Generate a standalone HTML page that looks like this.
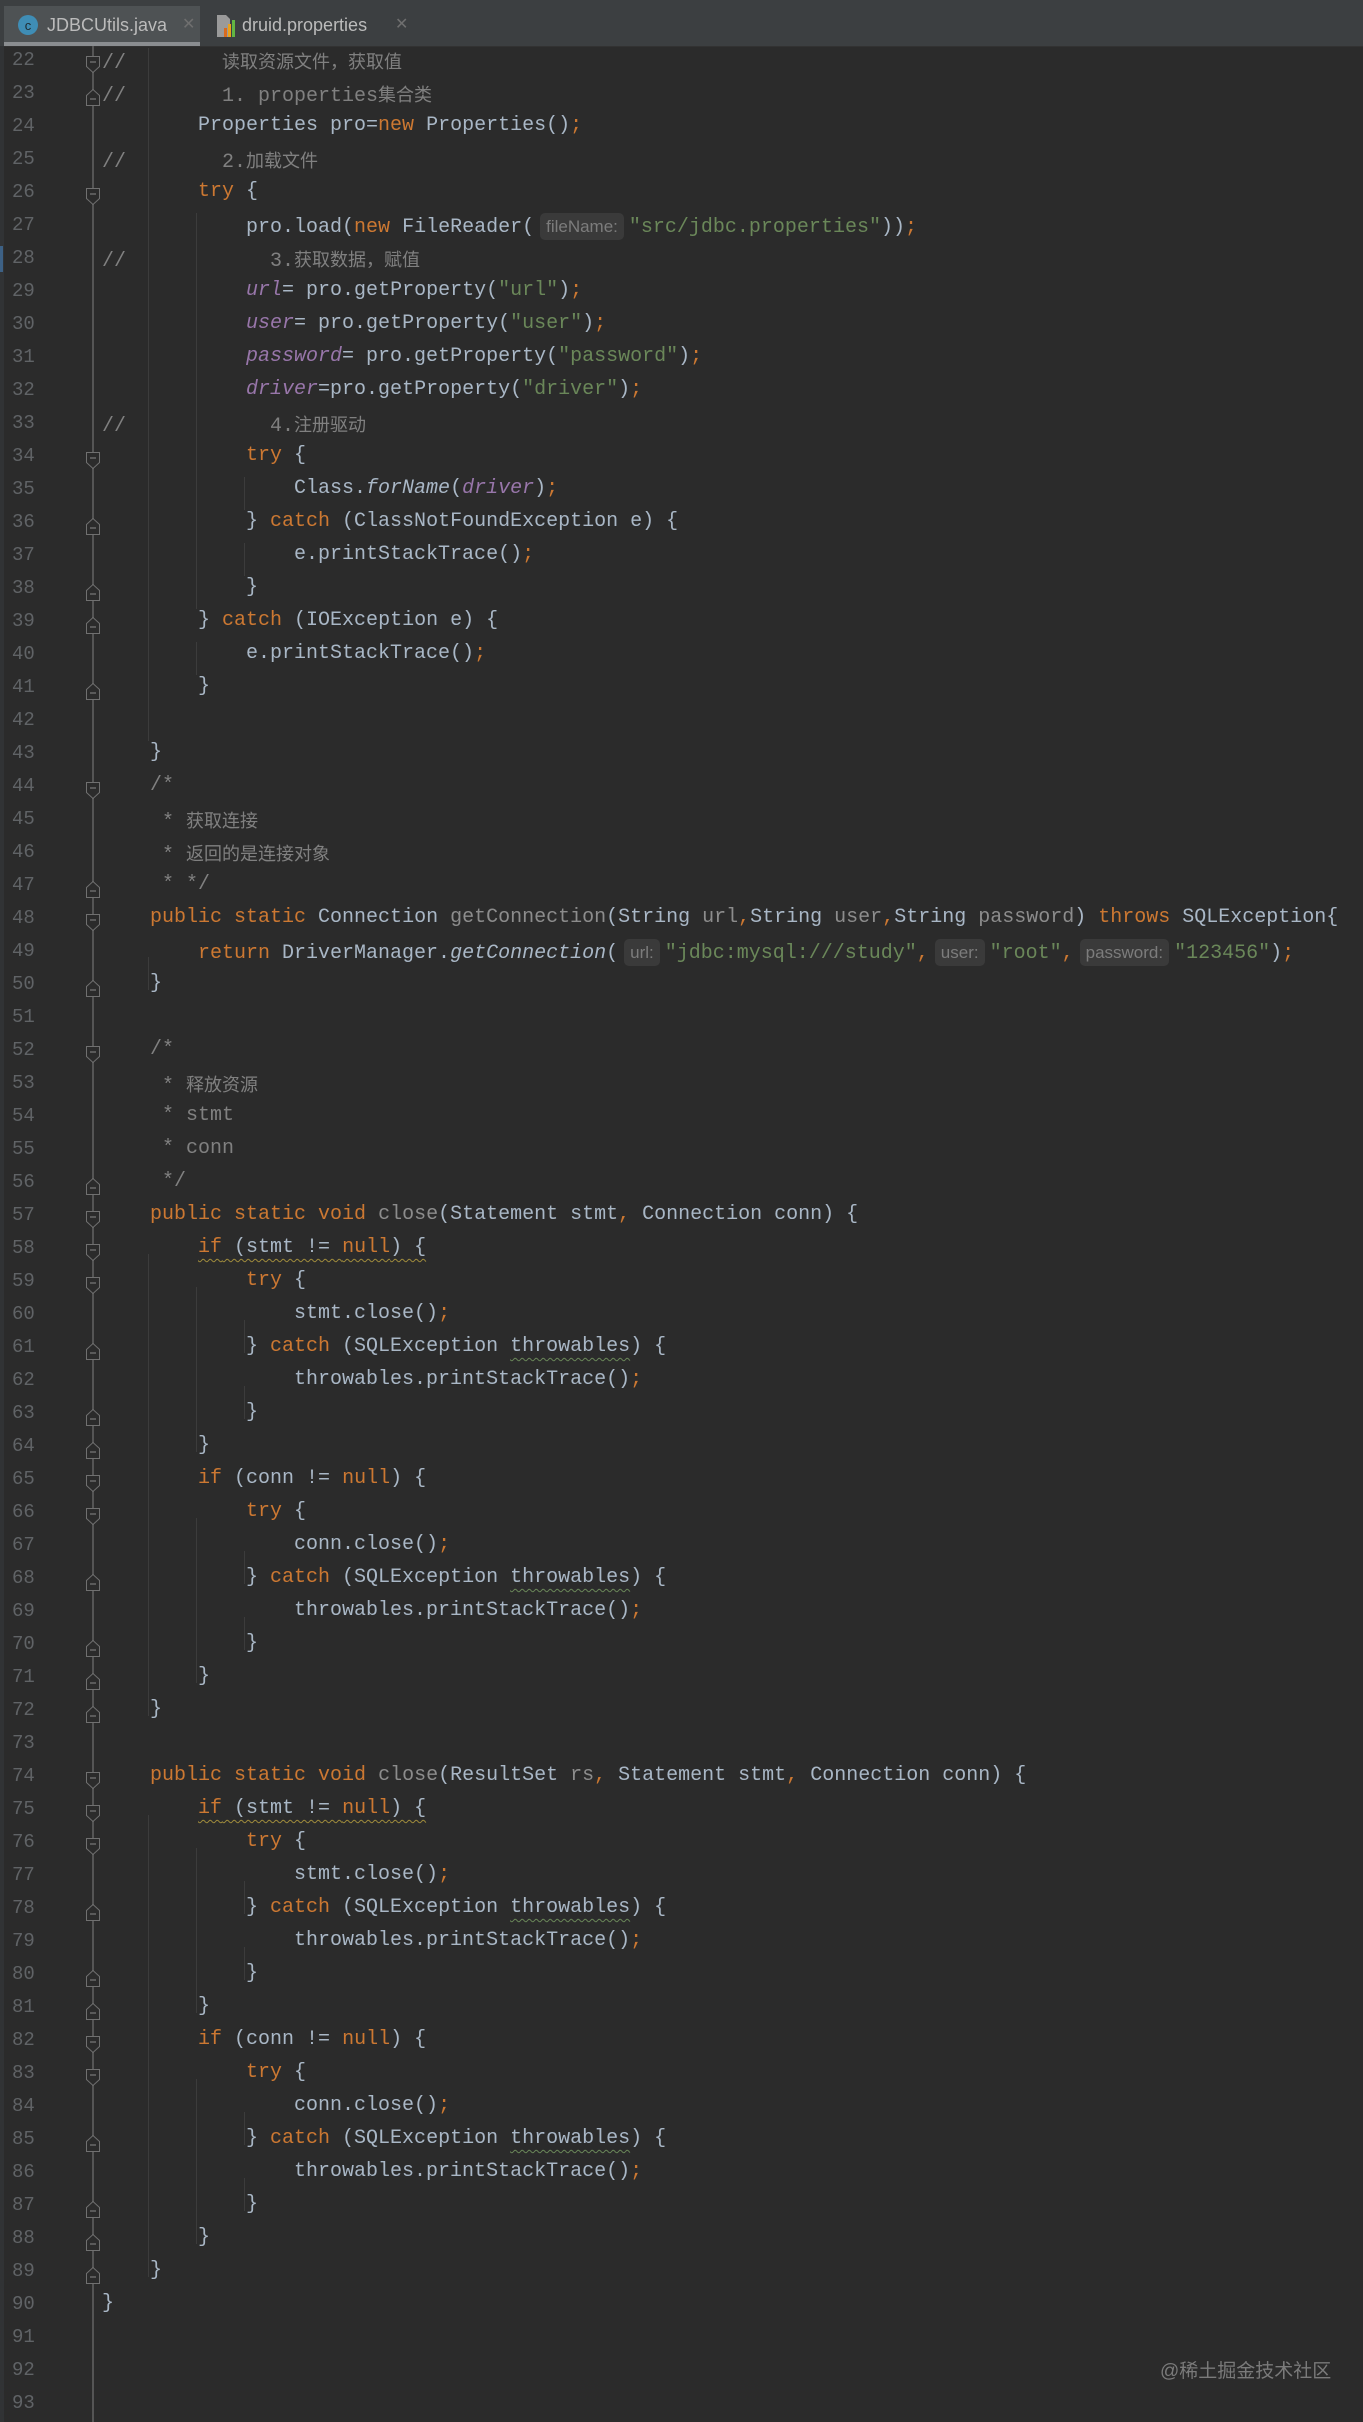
<!DOCTYPE html>
<html><head><meta charset="utf-8"><style>
html,body{margin:0;padding:0;background:#2b2b2b;width:1363px;height:2422px;overflow:hidden;position:relative}
.tabs{position:absolute;left:0;top:0;width:1363px;height:46px;background:#3c3f41;border-bottom:1px solid #323232}
.tab{position:absolute;top:6px;height:40px;font:18px "Liberation Sans","DejaVu Sans",sans-serif;color:#bbbbbb;line-height:38px}
.t1{left:4px;width:196px;background:#4e5254;border-bottom:4px solid #8a8d90;box-sizing:border-box}
.x{color:#6f6f6f;font-size:16px}
.gl{position:absolute;left:92px;top:46px;width:2px;height:2376px;background:#555}
.edge{position:absolute;left:0;top:46px;width:4px;height:2376px;background:#313335}
.rows{position:absolute;left:0;top:48px;width:1363px}
.r{height:33px;line-height:33px;position:relative;white-space:pre;font:20px "Liberation Mono","DejaVu Sans Mono",monospace;color:#a9b7c6}
.n{position:absolute;left:12px;top:1px;color:#606366;font-size:19px}
.c{position:absolute;left:102px;top:0}
.f{position:absolute;left:85px;top:7px}
.k{color:#cc7832}.s{color:#6a8759}.m{color:#808080}.v{color:#9876aa;font-style:italic}.i{font-style:italic}.u{color:#8c8c8c}
.cj{font-family:"Liberation Sans","Noto Sans CJK SC",sans-serif;font-size:18px}
.h{display:inline-block;font:17px "Liberation Sans",sans-serif;color:#7c7c7c;background:#3a3a3a;border-radius:5px;padding:0 6px;margin:0 5px 0 6px;height:27px;line-height:27px;vertical-align:middle}
.w{text-decoration:underline wavy #a08c3c;text-underline-offset:6px;text-decoration-thickness:1px}
.wg{text-decoration:underline wavy #6a8759;text-underline-offset:6px;text-decoration-thickness:1px}
.g{position:absolute;width:1px;background:#3c3c3c}
.wm{position:absolute;left:1160px;top:2356px;font:19px "Liberation Sans","Noto Sans CJK SC",sans-serif;color:#7a7a7a}
</style></head><body>
<div class="tabs">
 <div class="tab t1"><svg style="position:absolute;left:14px;top:9px" width="20" height="20"><circle cx="10" cy="10" r="10" fill="#3f8db5"/><text x="10" y="15" text-anchor="middle" font-family="Liberation Sans" font-size="13" fill="#1e2a30">c</text></svg><span style="position:absolute;left:43px">JDBCUtils.java</span><span class="x" style="position:absolute;left:178px">✕</span></div>
 <div class="tab" style="left:210px;width:200px"><svg style="position:absolute;left:6px;top:8px" width="20" height="24"><path d="M1 1h9l4 4v18H1z" fill="#9a9a9a"/><rect x="8" y="14" width="3" height="9" fill="#d96b1e"/><rect x="12" y="10" width="3" height="13" fill="#e9a11b"/><rect x="16" y="6" width="3" height="17" fill="#62b543"/></svg><span style="position:absolute;left:32px">druid.properties</span><span class="x" style="position:absolute;left:185px">✕</span></div>
</div>
<div class="edge"></div>
<div style="position:absolute;left:0;top:246px;width:3px;height:26px;background:#3d6185"></div>
<div class="gl"></div>
<div class="g" style="left:148px;top:48px;height:693px"></div>
<div class="g" style="left:148px;top:957px;height:33px"></div>
<div class="g" style="left:148px;top:1254px;height:462px"></div>
<div class="g" style="left:148px;top:1815px;height:462px"></div>
<div class="g" style="left:196px;top:213px;height:396px"></div>
<div class="g" style="left:196px;top:642px;height:33px"></div>
<div class="g" style="left:196px;top:1287px;height:165px"></div>
<div class="g" style="left:196px;top:1518px;height:165px"></div>
<div class="g" style="left:196px;top:1848px;height:165px"></div>
<div class="g" style="left:196px;top:2079px;height:165px"></div>
<div class="g" style="left:244px;top:477px;height:33px"></div>
<div class="g" style="left:244px;top:543px;height:33px"></div>
<div class="g" style="left:244px;top:1320px;height:33px"></div>
<div class="g" style="left:244px;top:1386px;height:33px"></div>
<div class="g" style="left:244px;top:1551px;height:33px"></div>
<div class="g" style="left:244px;top:1617px;height:33px"></div>
<div class="g" style="left:244px;top:1881px;height:33px"></div>
<div class="g" style="left:244px;top:1947px;height:33px"></div>
<div class="g" style="left:244px;top:2112px;height:33px"></div>
<div class="g" style="left:244px;top:2178px;height:33px"></div>
<div class="rows">
<div class="r"><span class="n">22</span><svg class="f" width="16" height="19"><path d="M1.5 1.5h13v10l-6.5 6-6.5-6z" fill="#2b2b2b" stroke="#707070"/><path d="M5 7h6" stroke="#8a8a8a"/></svg><span class="c m">//        <span class="cj">读取资源文件，获取值</span></span></div>
<div class="r"><span class="n">23</span><svg class="f" width="16" height="19"><path d="M1.5 17.5h13v-10l-6.5-6-6.5 6z" fill="#2b2b2b" stroke="#707070"/><path d="M5 11h6" stroke="#8a8a8a"/></svg><span class="c m">//        1. properties<span class="cj">集合类</span></span></div>
<div class="r"><span class="n">24</span><span class="c">        Properties pro=<span class="k">new</span> Properties()<span class="k">;</span></span></div>
<div class="r"><span class="n">25</span><span class="c m">//        2.<span class="cj">加载文件</span></span></div>
<div class="r"><span class="n">26</span><svg class="f" width="16" height="19"><path d="M1.5 1.5h13v10l-6.5 6-6.5-6z" fill="#2b2b2b" stroke="#707070"/><path d="M5 7h6" stroke="#8a8a8a"/></svg><span class="c">        <span class="k">try</span> {</span></div>
<div class="r"><span class="n">27</span><span class="c">            pro.load(<span class="k">new</span> FileReader(<span class="h">fileName:</span><span class="s">"src/jdbc.properties"</span>))<span class="k">;</span></span></div>
<div class="r"><span class="n">28</span><span class="c m">//            3.<span class="cj">获取数据，赋值</span></span></div>
<div class="r"><span class="n">29</span><span class="c">            <span class="v">url</span>= pro.getProperty(<span class="s">"url"</span>)<span class="k">;</span></span></div>
<div class="r"><span class="n">30</span><span class="c">            <span class="v">user</span>= pro.getProperty(<span class="s">"user"</span>)<span class="k">;</span></span></div>
<div class="r"><span class="n">31</span><span class="c">            <span class="v">password</span>= pro.getProperty(<span class="s">"password"</span>)<span class="k">;</span></span></div>
<div class="r"><span class="n">32</span><span class="c">            <span class="v">driver</span>=pro.getProperty(<span class="s">"driver"</span>)<span class="k">;</span></span></div>
<div class="r"><span class="n">33</span><span class="c m">//            4.<span class="cj">注册驱动</span></span></div>
<div class="r"><span class="n">34</span><svg class="f" width="16" height="19"><path d="M1.5 1.5h13v10l-6.5 6-6.5-6z" fill="#2b2b2b" stroke="#707070"/><path d="M5 7h6" stroke="#8a8a8a"/></svg><span class="c">            <span class="k">try</span> {</span></div>
<div class="r"><span class="n">35</span><span class="c">                Class.<span class="i">forName</span>(<span class="v">driver</span>)<span class="k">;</span></span></div>
<div class="r"><span class="n">36</span><svg class="f" width="16" height="19"><path d="M1.5 17.5h13v-10l-6.5-6-6.5 6z" fill="#2b2b2b" stroke="#707070"/><path d="M5 11h6" stroke="#8a8a8a"/></svg><span class="c">            } <span class="k">catch</span> (ClassNotFoundException e) {</span></div>
<div class="r"><span class="n">37</span><span class="c">                e.printStackTrace()<span class="k">;</span></span></div>
<div class="r"><span class="n">38</span><svg class="f" width="16" height="19"><path d="M1.5 17.5h13v-10l-6.5-6-6.5 6z" fill="#2b2b2b" stroke="#707070"/><path d="M5 11h6" stroke="#8a8a8a"/></svg><span class="c">            }</span></div>
<div class="r"><span class="n">39</span><svg class="f" width="16" height="19"><path d="M1.5 17.5h13v-10l-6.5-6-6.5 6z" fill="#2b2b2b" stroke="#707070"/><path d="M5 11h6" stroke="#8a8a8a"/></svg><span class="c">        } <span class="k">catch</span> (IOException e) {</span></div>
<div class="r"><span class="n">40</span><span class="c">            e.printStackTrace()<span class="k">;</span></span></div>
<div class="r"><span class="n">41</span><svg class="f" width="16" height="19"><path d="M1.5 17.5h13v-10l-6.5-6-6.5 6z" fill="#2b2b2b" stroke="#707070"/><path d="M5 11h6" stroke="#8a8a8a"/></svg><span class="c">        }</span></div>
<div class="r"><span class="n">42</span></div>
<div class="r"><span class="n">43</span><span class="c">    }</span></div>
<div class="r"><span class="n">44</span><svg class="f" width="16" height="19"><path d="M1.5 1.5h13v10l-6.5 6-6.5-6z" fill="#2b2b2b" stroke="#707070"/><path d="M5 7h6" stroke="#8a8a8a"/></svg><span class="c m">    /*</span></div>
<div class="r"><span class="n">45</span><span class="c m">     * <span class="cj">获取连接</span></span></div>
<div class="r"><span class="n">46</span><span class="c m">     * <span class="cj">返回的是连接对象</span></span></div>
<div class="r"><span class="n">47</span><svg class="f" width="16" height="19"><path d="M1.5 17.5h13v-10l-6.5-6-6.5 6z" fill="#2b2b2b" stroke="#707070"/><path d="M5 11h6" stroke="#8a8a8a"/></svg><span class="c m">     * */</span></div>
<div class="r"><span class="n">48</span><svg class="f" width="16" height="19"><path d="M1.5 1.5h13v10l-6.5 6-6.5-6z" fill="#2b2b2b" stroke="#707070"/><path d="M5 7h6" stroke="#8a8a8a"/></svg><span class="c">    <span class="k">public static</span> Connection <span class="u">getConnection</span>(String <span class="u">url</span><span class="k">,</span>String <span class="u">user</span><span class="k">,</span>String <span class="u">password</span>) <span class="k">throws</span> SQLException{</span></div>
<div class="r"><span class="n">49</span><span class="c">        <span class="k">return</span> DriverManager.<span class="i">getConnection</span>(<span class="h">url:</span><span class="s">"jdbc:mysql:///study"</span><span class="k">,</span><span class="h">user:</span><span class="s">"root"</span><span class="k">,</span><span class="h">password:</span><span class="s">"123456"</span>)<span class="k">;</span></span></div>
<div class="r"><span class="n">50</span><svg class="f" width="16" height="19"><path d="M1.5 17.5h13v-10l-6.5-6-6.5 6z" fill="#2b2b2b" stroke="#707070"/><path d="M5 11h6" stroke="#8a8a8a"/></svg><span class="c">    }</span></div>
<div class="r"><span class="n">51</span></div>
<div class="r"><span class="n">52</span><svg class="f" width="16" height="19"><path d="M1.5 1.5h13v10l-6.5 6-6.5-6z" fill="#2b2b2b" stroke="#707070"/><path d="M5 7h6" stroke="#8a8a8a"/></svg><span class="c m">    /*</span></div>
<div class="r"><span class="n">53</span><span class="c m">     * <span class="cj">释放资源</span></span></div>
<div class="r"><span class="n">54</span><span class="c m">     * stmt</span></div>
<div class="r"><span class="n">55</span><span class="c m">     * conn</span></div>
<div class="r"><span class="n">56</span><svg class="f" width="16" height="19"><path d="M1.5 17.5h13v-10l-6.5-6-6.5 6z" fill="#2b2b2b" stroke="#707070"/><path d="M5 11h6" stroke="#8a8a8a"/></svg><span class="c m">     */</span></div>
<div class="r"><span class="n">57</span><svg class="f" width="16" height="19"><path d="M1.5 1.5h13v10l-6.5 6-6.5-6z" fill="#2b2b2b" stroke="#707070"/><path d="M5 7h6" stroke="#8a8a8a"/></svg><span class="c">    <span class="k">public static void</span> <span class="u">close</span>(Statement stmt<span class="k">,</span> Connection conn) {</span></div>
<div class="r"><span class="n">58</span><svg class="f" width="16" height="19"><path d="M1.5 1.5h13v10l-6.5 6-6.5-6z" fill="#2b2b2b" stroke="#707070"/><path d="M5 7h6" stroke="#8a8a8a"/></svg><span class="c">        <span class="w"><span class="k">if</span> (stmt != <span class="k">null</span>) {</span></span></div>
<div class="r"><span class="n">59</span><svg class="f" width="16" height="19"><path d="M1.5 1.5h13v10l-6.5 6-6.5-6z" fill="#2b2b2b" stroke="#707070"/><path d="M5 7h6" stroke="#8a8a8a"/></svg><span class="c">            <span class="k">try</span> {</span></div>
<div class="r"><span class="n">60</span><span class="c">                stmt.close()<span class="k">;</span></span></div>
<div class="r"><span class="n">61</span><svg class="f" width="16" height="19"><path d="M1.5 17.5h13v-10l-6.5-6-6.5 6z" fill="#2b2b2b" stroke="#707070"/><path d="M5 11h6" stroke="#8a8a8a"/></svg><span class="c">            } <span class="k">catch</span> (SQLException <span class="wg">throwables</span>) {</span></div>
<div class="r"><span class="n">62</span><span class="c">                throwables.printStackTrace()<span class="k">;</span></span></div>
<div class="r"><span class="n">63</span><svg class="f" width="16" height="19"><path d="M1.5 17.5h13v-10l-6.5-6-6.5 6z" fill="#2b2b2b" stroke="#707070"/><path d="M5 11h6" stroke="#8a8a8a"/></svg><span class="c">            }</span></div>
<div class="r"><span class="n">64</span><svg class="f" width="16" height="19"><path d="M1.5 17.5h13v-10l-6.5-6-6.5 6z" fill="#2b2b2b" stroke="#707070"/><path d="M5 11h6" stroke="#8a8a8a"/></svg><span class="c">        }</span></div>
<div class="r"><span class="n">65</span><svg class="f" width="16" height="19"><path d="M1.5 1.5h13v10l-6.5 6-6.5-6z" fill="#2b2b2b" stroke="#707070"/><path d="M5 7h6" stroke="#8a8a8a"/></svg><span class="c">        <span class="k">if</span> (conn != <span class="k">null</span>) {</span></div>
<div class="r"><span class="n">66</span><svg class="f" width="16" height="19"><path d="M1.5 1.5h13v10l-6.5 6-6.5-6z" fill="#2b2b2b" stroke="#707070"/><path d="M5 7h6" stroke="#8a8a8a"/></svg><span class="c">            <span class="k">try</span> {</span></div>
<div class="r"><span class="n">67</span><span class="c">                conn.close()<span class="k">;</span></span></div>
<div class="r"><span class="n">68</span><svg class="f" width="16" height="19"><path d="M1.5 17.5h13v-10l-6.5-6-6.5 6z" fill="#2b2b2b" stroke="#707070"/><path d="M5 11h6" stroke="#8a8a8a"/></svg><span class="c">            } <span class="k">catch</span> (SQLException <span class="wg">throwables</span>) {</span></div>
<div class="r"><span class="n">69</span><span class="c">                throwables.printStackTrace()<span class="k">;</span></span></div>
<div class="r"><span class="n">70</span><svg class="f" width="16" height="19"><path d="M1.5 17.5h13v-10l-6.5-6-6.5 6z" fill="#2b2b2b" stroke="#707070"/><path d="M5 11h6" stroke="#8a8a8a"/></svg><span class="c">            }</span></div>
<div class="r"><span class="n">71</span><svg class="f" width="16" height="19"><path d="M1.5 17.5h13v-10l-6.5-6-6.5 6z" fill="#2b2b2b" stroke="#707070"/><path d="M5 11h6" stroke="#8a8a8a"/></svg><span class="c">        }</span></div>
<div class="r"><span class="n">72</span><svg class="f" width="16" height="19"><path d="M1.5 17.5h13v-10l-6.5-6-6.5 6z" fill="#2b2b2b" stroke="#707070"/><path d="M5 11h6" stroke="#8a8a8a"/></svg><span class="c">    }</span></div>
<div class="r"><span class="n">73</span></div>
<div class="r"><span class="n">74</span><svg class="f" width="16" height="19"><path d="M1.5 1.5h13v10l-6.5 6-6.5-6z" fill="#2b2b2b" stroke="#707070"/><path d="M5 7h6" stroke="#8a8a8a"/></svg><span class="c">    <span class="k">public static void</span> <span class="u">close</span>(ResultSet <span class="u">rs</span><span class="k">,</span> Statement stmt<span class="k">,</span> Connection conn) {</span></div>
<div class="r"><span class="n">75</span><svg class="f" width="16" height="19"><path d="M1.5 1.5h13v10l-6.5 6-6.5-6z" fill="#2b2b2b" stroke="#707070"/><path d="M5 7h6" stroke="#8a8a8a"/></svg><span class="c">        <span class="w"><span class="k">if</span> (stmt != <span class="k">null</span>) {</span></span></div>
<div class="r"><span class="n">76</span><svg class="f" width="16" height="19"><path d="M1.5 1.5h13v10l-6.5 6-6.5-6z" fill="#2b2b2b" stroke="#707070"/><path d="M5 7h6" stroke="#8a8a8a"/></svg><span class="c">            <span class="k">try</span> {</span></div>
<div class="r"><span class="n">77</span><span class="c">                stmt.close()<span class="k">;</span></span></div>
<div class="r"><span class="n">78</span><svg class="f" width="16" height="19"><path d="M1.5 17.5h13v-10l-6.5-6-6.5 6z" fill="#2b2b2b" stroke="#707070"/><path d="M5 11h6" stroke="#8a8a8a"/></svg><span class="c">            } <span class="k">catch</span> (SQLException <span class="wg">throwables</span>) {</span></div>
<div class="r"><span class="n">79</span><span class="c">                throwables.printStackTrace()<span class="k">;</span></span></div>
<div class="r"><span class="n">80</span><svg class="f" width="16" height="19"><path d="M1.5 17.5h13v-10l-6.5-6-6.5 6z" fill="#2b2b2b" stroke="#707070"/><path d="M5 11h6" stroke="#8a8a8a"/></svg><span class="c">            }</span></div>
<div class="r"><span class="n">81</span><svg class="f" width="16" height="19"><path d="M1.5 17.5h13v-10l-6.5-6-6.5 6z" fill="#2b2b2b" stroke="#707070"/><path d="M5 11h6" stroke="#8a8a8a"/></svg><span class="c">        }</span></div>
<div class="r"><span class="n">82</span><svg class="f" width="16" height="19"><path d="M1.5 1.5h13v10l-6.5 6-6.5-6z" fill="#2b2b2b" stroke="#707070"/><path d="M5 7h6" stroke="#8a8a8a"/></svg><span class="c">        <span class="k">if</span> (conn != <span class="k">null</span>) {</span></div>
<div class="r"><span class="n">83</span><svg class="f" width="16" height="19"><path d="M1.5 1.5h13v10l-6.5 6-6.5-6z" fill="#2b2b2b" stroke="#707070"/><path d="M5 7h6" stroke="#8a8a8a"/></svg><span class="c">            <span class="k">try</span> {</span></div>
<div class="r"><span class="n">84</span><span class="c">                conn.close()<span class="k">;</span></span></div>
<div class="r"><span class="n">85</span><svg class="f" width="16" height="19"><path d="M1.5 17.5h13v-10l-6.5-6-6.5 6z" fill="#2b2b2b" stroke="#707070"/><path d="M5 11h6" stroke="#8a8a8a"/></svg><span class="c">            } <span class="k">catch</span> (SQLException <span class="wg">throwables</span>) {</span></div>
<div class="r"><span class="n">86</span><span class="c">                throwables.printStackTrace()<span class="k">;</span></span></div>
<div class="r"><span class="n">87</span><svg class="f" width="16" height="19"><path d="M1.5 17.5h13v-10l-6.5-6-6.5 6z" fill="#2b2b2b" stroke="#707070"/><path d="M5 11h6" stroke="#8a8a8a"/></svg><span class="c">            }</span></div>
<div class="r"><span class="n">88</span><svg class="f" width="16" height="19"><path d="M1.5 17.5h13v-10l-6.5-6-6.5 6z" fill="#2b2b2b" stroke="#707070"/><path d="M5 11h6" stroke="#8a8a8a"/></svg><span class="c">        }</span></div>
<div class="r"><span class="n">89</span><svg class="f" width="16" height="19"><path d="M1.5 17.5h13v-10l-6.5-6-6.5 6z" fill="#2b2b2b" stroke="#707070"/><path d="M5 11h6" stroke="#8a8a8a"/></svg><span class="c">    }</span></div>
<div class="r"><span class="n">90</span><span class="c">}</span></div>
<div class="r"><span class="n">91</span></div>
<div class="r"><span class="n">92</span></div>
<div class="r"><span class="n">93</span></div>
</div>
<div class="wm">@稀土掘金技术社区</div>
</body></html>
